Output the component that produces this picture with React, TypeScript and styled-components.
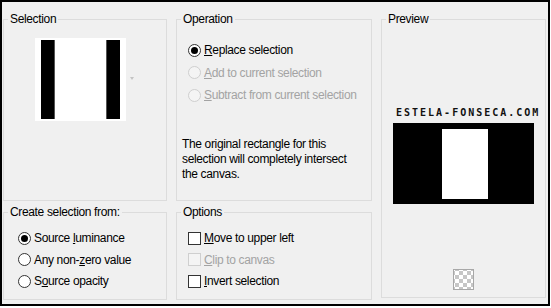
import React from "react";
import styled, { createGlobalStyle } from "styled-components";

const GlobalStyle = createGlobalStyle`
  html, body { margin: 0; padding: 0; background: #ffffff; }
  body { font-family: "Liberation Sans", Arial, sans-serif; }
`;

const Frame = styled.div`
  box-sizing: border-box;
  width: 550px;
  height: 306px;
  border: 2px solid #000;
  background: #f0f0f0;
  display: grid;
  grid-template-columns: 164px 196px 165px;
  grid-template-rows: 189px 95px;
  grid-template-areas:
    "sel op prev"
    "src opts prev";
  column-gap: 9px;
  row-gap: 4px;
  padding: 10px 0 0 1px;
  font-size: 12px;
  letter-spacing: -0.35px;
  color: #000;
`;

const GroupBox = styled.fieldset<{ $area: string }>`
  grid-area: ${(p) => p.$area};
  margin: 0;
  padding: 0;
  min-width: 0;
  border: 1px solid #dcdcdc;
  display: flex;
  flex-direction: column;
  ${(p) => (p.$area === "prev" ? "margin-bottom: 2px;" : "")}
`;

const Legend = styled.legend`
  margin-left: 4px;
  padding: 0 2px;
  line-height: 14px;
  font-size: 12px;
  color: #000;
`;

const ThumbRow = styled.div`
  display: flex;
  align-items: center;
  padding: 12px 0 0 31px;
`;

const Thumb = styled.div`
  box-sizing: border-box;
  width: 91px;
  height: 83px;
  background: #fff;
  padding: 2px 6px;
  display: flex;
  justify-content: space-between;
`;

const Bar = styled.div<{ $side: "l" | "r" }>`
  width: 14px;
  height: 79px;
  background: #000;
  box-shadow: ${(p) => (p.$side === "l" ? "inset -1px 0 0 #555" : "inset 1px 0 0 #555")};
`;

const DropArrow = styled.div`
  margin-left: 4px;
  margin-top: -2px;
  width: 0;
  height: 0;
  border-left: 2.5px solid transparent;
  border-right: 2.5px solid transparent;
  border-top: 3px solid #c4c4c4;
`;

const OptionList = styled.div<{ $top: number; $left: number; $row: number }>`
  display: flex;
  flex-direction: column;
  padding: ${(p) => p.$top}px 0 0 ${(p) => p.$left}px;
  & > * { height: ${(p) => p.$row}px; }
`;

const OptionRow = styled.div<{ $disabled?: boolean }>`
  display: flex;
  align-items: center;
  white-space: nowrap;
  color: ${(p) => (p.$disabled ? "#a3a3a3" : "#000")};
`;

const RadioCircle = styled.span<{ $checked?: boolean; $disabled?: boolean }>`
  box-sizing: border-box;
  flex: none;
  width: 13px;
  height: 13px;
  margin-right: 3px;
  border-radius: 50%;
  border: 1px solid ${(p) => (p.$disabled ? "#cfcfcf" : "#333")};
  background: ${(p) => (p.$disabled ? "#f4f4f4" : "#fff")};
  display: flex;
  align-items: center;
  justify-content: center;
  &::after {
    content: "";
    display: ${(p) => (p.$checked ? "block" : "none")};
    width: 7px;
    height: 7px;
    border-radius: 50%;
    background: #000;
  }
`;

const CheckBox = styled.span<{ $disabled?: boolean }>`
  box-sizing: border-box;
  flex: none;
  width: 13px;
  height: 13px;
  margin-right: 3px;
  border: 1px solid ${(p) => (p.$disabled ? "#cfcfcf" : "#333")};
  background: ${(p) => (p.$disabled ? "#f4f4f4" : "#fff")};
`;

const Key = styled.u`
  text-decoration: underline;
  text-underline-offset: 1px;
`;

const Description = styled.p`
  margin: 30px 0 0 5px;
  line-height: 15px;
  white-space: nowrap;
`;

const WaterMark = styled.div`
  margin-top: 82px;
  padding-left: 14px;
  font-family: "DejaVu Sans Mono", monospace;
  font-weight: bold;
  font-size: 10px;
  line-height: 10px;
  letter-spacing: 2px;
  color: #111;
  white-space: nowrap;
`;

const PreviewImage = styled.div`
  box-sizing: border-box;
  align-self: center;
  margin-top: 5px;
  width: 141px;
  height: 81px;
  background: #000;
  padding: 6px 0 0 49px;
`;

const PreviewWhite = styled.div`
  width: 46px;
  height: 70px;
  background: #fff;
`;

const Checker = styled.div`
  box-sizing: border-box;
  align-self: center;
  margin-top: auto;
  margin-bottom: 7px;
  width: 21px;
  height: 21px;
  border: 1px solid #a8a8a8;
  background-color: #fff;
  background-image: conic-gradient(#c6c6c6 25%, #fff 0 50%, #c6c6c6 0 75%, #fff 0);
  background-size: 8px 8px;
  background-position: 1px 1px;
`;

type Opt = { pre: string; key: string; post: string; checked?: boolean; disabled?: boolean };

const Label = ({ o }: { o: Opt }) => (
  <span>
    {o.pre}
    <Key>{o.key}</Key>
    {o.post}
  </span>
);

const operation: Opt[] = [
  { pre: "", key: "R", post: "eplace selection", checked: true },
  { pre: "", key: "A", post: "dd to current selection", disabled: true },
  { pre: "", key: "S", post: "ubtract from current selection", disabled: true },
];

const source: Opt[] = [
  { pre: "Source ", key: "l", post: "uminance", checked: true },
  { pre: "Any non-", key: "z", post: "ero value" },
  { pre: "S", key: "o", post: "urce opacity" },
];

const options: Opt[] = [
  { pre: "", key: "M", post: "ove to upper left" },
  { pre: "", key: "C", post: "lip to canvas", disabled: true },
  { pre: "", key: "I", post: "nvert selection" },
];

export default function App() {
  return (
    <>
      <GlobalStyle />
      <Frame>
        <GroupBox $area="sel">
          <Legend>Selection</Legend>
          <ThumbRow>
            <Thumb>
              <Bar $side="l" />
              <Bar $side="r" />
            </Thumb>
            <DropArrow />
          </ThumbRow>
        </GroupBox>

        <GroupBox $area="op">
          <Legend>Operation</Legend>
          <OptionList $top={13} $left={11} $row={22.5}>
            {operation.map((o) => (
              <OptionRow key={o.post} $disabled={o.disabled}>
                <RadioCircle $checked={o.checked} $disabled={o.disabled} />
                <Label o={o} />
              </OptionRow>
            ))}
          </OptionList>
          <Description>
            The original rectangle for this
            <br />
            selection will completely intersect
            <br />
            the canvas.
          </Description>
        </GroupBox>

        <GroupBox $area="prev">
          <Legend>Preview</Legend>
          <WaterMark>ESTELA-FONSECA.COM</WaterMark>
          <PreviewImage>
            <PreviewWhite />
          </PreviewImage>
          <Checker />
        </GroupBox>

        <GroupBox $area="src">
          <Legend>Create selection from:</Legend>
          <OptionList $top={8.5} $left={14} $row={21.5}>
            {source.map((o) => (
              <OptionRow key={o.post}>
                <RadioCircle $checked={o.checked} />
                <Label o={o} />
              </OptionRow>
            ))}
          </OptionList>
        </GroupBox>

        <GroupBox $area="opts">
          <Legend>Options</Legend>
          <OptionList $top={8.5} $left={11} $row={21.5}>
            {options.map((o) => (
              <OptionRow key={o.post} $disabled={o.disabled}>
                <CheckBox $disabled={o.disabled} />
                <Label o={o} />
              </OptionRow>
            ))}
          </OptionList>
        </GroupBox>
      </Frame>
    </>
  );
}
